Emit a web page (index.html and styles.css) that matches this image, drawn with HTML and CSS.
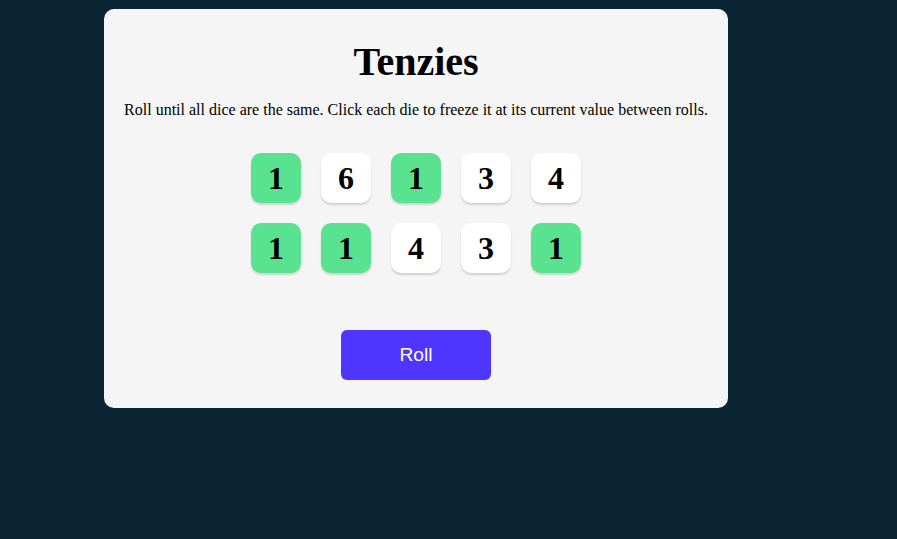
FILE: index.html
```html
<!DOCTYPE html>
<html>
<head>
<meta charset="utf-8">
<link rel="stylesheet" href="styles.css">
</head>
<body>
<main class="panel">
  <h1 class="title">Tenzies</h1>
  <p class="instructions">Roll until all dice are the same. Click each die to freeze it at its current value between rolls.</p>
  <div class="dice">
    <button class="die held">1</button>
    <button class="die">6</button>
    <button class="die held">1</button>
    <button class="die">3</button>
    <button class="die">4</button>
    <button class="die held">1</button>
    <button class="die held">1</button>
    <button class="die">4</button>
    <button class="die">3</button>
    <button class="die held">1</button>
  </div>
  <button class="roll">Roll</button>
</main>
</body>
</html>
```
FILE: styles.css
```css
html, body {
  margin: 0;
  height: 100%;
}
body {
  background: #0B2434;
  padding: 9px 0 0 104px;
  box-sizing: border-box;
  font-family: "Liberation Serif", "Times New Roman", serif;
}
.panel {
  width: 624px;
  height: 399px;
  box-sizing: border-box;
  background: #F5F5F5;
  border-radius: 10px;
  padding-top: 33px;
  display: flex;
  flex-direction: column;
  align-items: center;
}
.title {
  margin: 0;
  font-size: 40px;
  line-height: 1;
  font-weight: bold;
  color: #000;
}
.instructions {
  margin: 20px 0 0;
  font-size: 16px;
  line-height: 1;
  color: #000;
}
.dice {
  margin-top: 35px;
  display: grid;
  grid-template-columns: repeat(5, 50px);
  grid-auto-rows: 50px;
  gap: 20px;
}
.die {
  width: 50px;
  height: 50px;
  border: none;
  border-radius: 10px;
  background: #FFFFFF;
  box-shadow: 0 2px 2px rgba(0, 0, 0, 0.15);
  font-family: "Liberation Serif", "Times New Roman", serif;
  font-size: 32px;
  font-weight: bold;
  color: #000;
  padding: 0;
  display: flex;
  align-items: center;
  justify-content: center;
  cursor: pointer;
}
.die.held {
  background: #59E391;
}
.roll {
  margin-top: 57px;
  width: 150px;
  height: 50px;
  border: none;
  border-radius: 6px;
  background: #5035FF;
  color: #FFFFFF;
  font-family: "Liberation Sans", Arial, sans-serif;
  font-size: 19.2px;
  cursor: pointer;
}
```
